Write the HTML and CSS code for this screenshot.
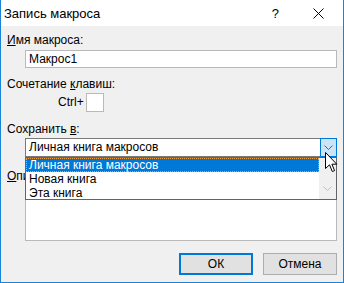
FILE: index.html
```html
<!DOCTYPE html>
<html lang="ru">
<head>
<meta charset="utf-8">
<link rel="stylesheet" href="styles.css">
</head>
<body>
<div class="window">
  <div class="titlebar">
    <span class="title">Запись макроса</span>
    <span class="help">?</span>
    <svg class="close" width="11" height="11" viewBox="0 0 11 11"><path d="M0.5 0.5 L10.5 10.5 M10.5 0.5 L0.5 10.5" stroke="#000" stroke-width="1" fill="none"/></svg>
  </div>
  <div class="content">
    <div class="label l1"><u>И</u>мя макроса:</div>
    <div class="input">Макрос1</div>
    <div class="label l2">Сочетание <u>к</u>лавиш:</div>
    <div class="shortcut"><span class="ctrl">Ctrl+</span><span class="keybox"></span></div>
    <div class="label l3">Сохранить <u>в</u>:</div>
    <div class="combo">
      <span class="combo-text">Личная книга макросов</span>
      <span class="combo-btn"><svg width="9" height="5" viewBox="0 0 9 5"><path d="M0.5 0.5 L4.5 4.5 L8.5 0.5" stroke="#606060" fill="none"/></svg></span>
    </div>
    <div class="label l4"><u>О</u>писание:</div>
    <div class="textarea"></div>
    <div class="buttons">
      <button class="btn default">ОК</button>
      <button class="btn">Отмена</button>
    </div>
    <div class="droplist">
      <div class="items">
        <div class="item selected">Личная книга макросов</div>
        <div class="item">Новая книга</div>
        <div class="item">Эта книга</div>
      </div>
      <div class="scroll"><svg width="9" height="5" viewBox="0 0 9 5"><path d="M0.5 0.5 L4.5 4.5 L8.5 0.5" stroke="#c0c0c0" fill="none"/></svg></div>
    </div>
    <svg class="cursor" width="13" height="21" viewBox="0 0 13 21"><path d="M0.5 0.5 L0.5 16.5 L4.5 12.8 L7.3 19.5 L9.6 18.6 L6.9 12.2 L11.8 12.2 Z" fill="#fff" stroke="#000" stroke-width="1" stroke-linejoin="miter"/></svg>
  </div>
</div>
</body>
</html>
```
FILE: styles.css
```css
html, body {
  margin: 0;
  padding: 0;
}
body {
  font-family: "Liberation Sans", Arial, sans-serif;
  font-size: 12px;
  color: #000;
}
.window {
  width: 344px;
  height: 283px;
  box-sizing: border-box;
  border: 1px solid #1883d7;
  border-top: none;
  background: #f0f0f0;
  display: flex;
  flex-direction: column;
}
.titlebar {
  height: 26px;
  background: #fff;
  display: flex;
  align-items: center;
  padding-left: 3px;
  line-height: 15px;
}
.title {
  flex: 1;
  font-size: 13px;
}
.help {
  font-size: 13px;
  margin-right: 34px;
}
.close {
  margin-right: 19px;
}
.content {
  position: relative;
  flex: 1;
  display: flex;
  flex-direction: column;
  padding: 0 6px;
}
.label {
  height: 15px;
  line-height: 15px;
}
.label u {
  text-decoration-thickness: 1px;
  text-underline-offset: 1px;
}
.l1 { margin-top: 7px; }
.l2 { margin-top: 9px; }
.l3 { margin-top: 10px; }
.l4 { margin-top: 12px; }
.input {
  margin-top: 2px;
  margin-left: 18px;
  height: 18px;
  box-sizing: border-box;
  border: 1px solid #b9b9b9;
  background: #fff;
  padding-left: 3px;
  line-height: 16px;
}
.shortcut {
  margin-top: 1px;
  display: flex;
  align-items: center;
  padding-left: 51px;
  height: 19px;
}
.ctrl {
  width: 28px;
  line-height: 15px;
}
.keybox {
  width: 18px;
  height: 19px;
  box-sizing: border-box;
  border: 1px solid #b9b9b9;
  background: #fff;
}
.combo {
  margin-top: 1px;
  margin-left: 18px;
  height: 19px;
  box-sizing: border-box;
  border: 1px solid #7a7a7a;
  background: #fff;
  display: flex;
  align-items: center;
}
.combo-text {
  flex: 1;
  padding-left: 3px;
  line-height: 15px;
}
.combo-btn {
  width: 17px;
  height: 19px;
  margin: -1px -1px -1px 0;
  box-sizing: border-box;
  border: 1px solid #0078d7;
  background: #cce4f7;
  display: flex;
  align-items: center;
  justify-content: center;
}
.textarea {
  margin-top: 2px;
  margin-left: 18px;
  height: 55px;
  box-sizing: border-box;
  border: 1px solid #b9b9b9;
  background: #fff;
}
.buttons {
  margin-top: 12px;
  display: flex;
  justify-content: flex-end;
  gap: 10px;
}
.btn {
  width: 74px;
  height: 22px;
  box-sizing: border-box;
  border: 1px solid #adadad;
  background: #e1e1e1;
  font-family: inherit;
  font-size: 12px;
  color: #000;
  padding: 0;
  margin: 0;
}
.btn.default {
  border: 2px solid #0078d7;
}
.droplist {
  position: absolute;
  top: 131px;
  left: 24px;
  width: 312px;
  height: 43px;
  box-sizing: border-box;
  border: 1px solid #646464;
  background: #fff;
  display: flex;
}
.items {
  flex: 1;
}
.item {
  height: 14px;
  line-height: 14px;
  padding-left: 3px;
}
.item.selected {
  background: #0078d7;
  color: #fff;
  outline: 1px dotted #f0a040;
  outline-offset: -1px;
}
.scroll {
  width: 17px;
  background: #f0f0f0;
  display: flex;
  align-items: flex-end;
  justify-content: center;
  padding-bottom: 8px;
  box-sizing: border-box;
}
.cursor {
  position: absolute;
  top: 126px;
  left: 324px;
}
```
